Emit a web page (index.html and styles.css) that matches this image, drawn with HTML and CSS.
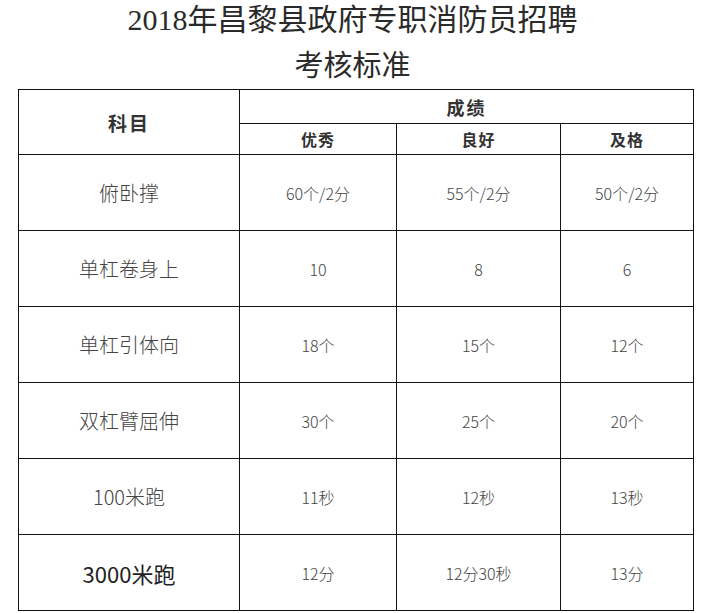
FILE: index.html
```html
<!DOCTYPE html>
<html lang="zh-CN">
<head>
<meta charset="utf-8">
<title>2018年昌黎县政府专职消防员招聘考核标准</title>
<link rel="stylesheet" href="styles.css">
</head>
<body>
<div class="page">
  <h1 class="title">
    <span class="title-line1">2018年昌黎县政府专职消防员招聘</span>
    <span class="title-line2">考核标准</span>
  </h1>
  <table class="grid">
    <colgroup>
      <col class="c-subject">
      <col class="c-excellent">
      <col class="c-good">
      <col class="c-pass">
    </colgroup>
    <thead>
      <tr class="head-1">
        <th rowspan="2" class="h-subject">科目</th>
        <th colspan="3" class="h-score">成绩</th>
      </tr>
      <tr class="head-2">
        <th class="h-level">优秀</th>
        <th class="h-level">良好</th>
        <th class="h-level">及格</th>
      </tr>
    </thead>
    <tbody>
      <tr class="row">
        <td class="subject">俯卧撑</td>
        <td class="val">60个/2分</td>
        <td class="val">55个/2分</td>
        <td class="val">50个/2分</td>
      </tr>
      <tr class="row">
        <td class="subject">单杠卷身上</td>
        <td class="val">10</td>
        <td class="val">8</td>
        <td class="val">6</td>
      </tr>
      <tr class="row">
        <td class="subject">单杠引体向</td>
        <td class="val">18个</td>
        <td class="val">15个</td>
        <td class="val">12个</td>
      </tr>
      <tr class="row">
        <td class="subject">双杠臂屈伸</td>
        <td class="val">30个</td>
        <td class="val">25个</td>
        <td class="val">20个</td>
      </tr>
      <tr class="row">
        <td class="subject">100米跑</td>
        <td class="val">11秒</td>
        <td class="val">12秒</td>
        <td class="val">13秒</td>
      </tr>
      <tr class="row">
        <td class="subject subject-dark">3000米跑</td>
        <td class="val">12分</td>
        <td class="val">12分30秒</td>
        <td class="val">13分</td>
      </tr>
    </tbody>
  </table>
</div>
</body>
</html>
```
FILE: styles.css
```css
html, body {
  margin: 0;
  padding: 0;
  background: #ffffff;
}

.page {
  width: 705px;
  padding-left: 18px;
  box-sizing: border-box;
}

.title {
  margin: 0 18px 0 0;
  padding: 0;
  display: flex;
  flex-direction: column;
  align-items: center;
  font-family: "Liberation Serif", "Noto Sans CJK SC", serif;
  font-weight: normal;
  color: #2a2a2a;
}

.title-line1 {
  font-size: 30px;
  line-height: 40px;
  height: 40px;
}

.title-line2 {
  margin-top: 6px;
  font-size: 29px;
  line-height: 40px;
  height: 40px;
  margin-bottom: 3px;
}

.grid {
  border-collapse: collapse;
  table-layout: fixed;
  width: 675px;
  font-family: "Noto Sans CJK SC", sans-serif;
}

.c-subject { width: 221px; }
.c-excellent { width: 157px; }
.c-good { width: 164px; }
.c-pass { width: 133px; }

.grid th,
.grid td {
  border: 1px solid #111;
  padding: 0;
  text-align: center;
  vertical-align: middle;
}

.grid th {
  color: #333;
  font-weight: 700;
}

.head-1 { height: 34px; }
.head-2 { height: 31px; }

.h-subject {
  font-size: 19px;
  letter-spacing: 2px;
}

.h-score {
  font-size: 18px;
  letter-spacing: 2px;
}

.h-level {
  font-size: 16px;
  letter-spacing: 1px;
}

.row { height: 76px; }

.subject {
  font-size: 20px;
  color: #444;
  font-weight: 300;
}

.subject-dark {
  font-size: 22px;
  color: #222;
  font-weight: 400;
}

.val {
  font-size: 16px;
  color: #444;
  font-weight: 300;
}
```
